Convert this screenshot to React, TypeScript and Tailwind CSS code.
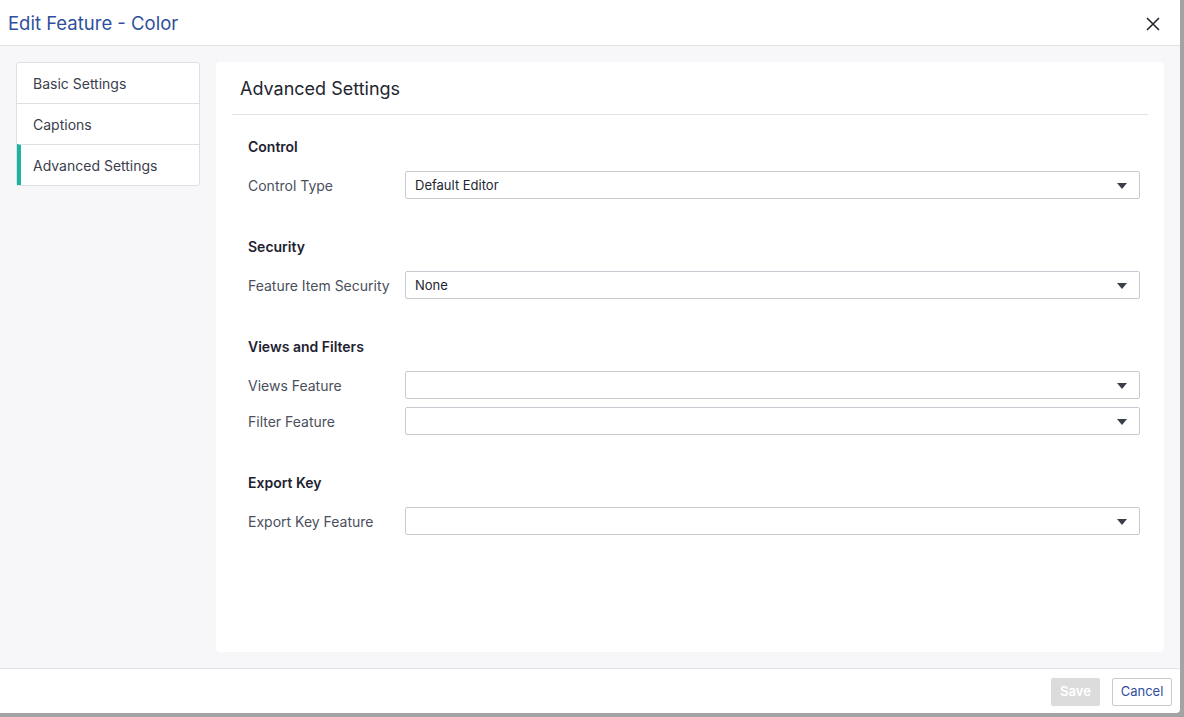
import React from 'react'

function Caret() {
  return (
    <svg width="10" height="6" viewBox="0 0 10 6" className="shrink-0">
      <path d="M0 0h10L5 6z" fill="#3b3f4a" />
    </svg>
  )
}

function Select({ value }: { value?: string }) {
  return (
    <div className="flex-1 h-[28px] flex items-center justify-between border border-[#c9c9d2] rounded-[2px] bg-white pl-[9px] pr-[12px] pt-[1px] text-[13px] text-[#23262f]">
      <span>{value ?? ''}</span>
      <Caret />
    </div>
  )
}

function Row({ label, value }: { label: string; value?: string }) {
  return (
    <div className="flex items-center">
      <div className="w-[157px] text-[14px] text-[#4b4f5c]">{label}</div>
      <Select value={value} />
    </div>
  )
}

function Section({ title, children }: { title: string; children: React.ReactNode }) {
  return (
    <div className="flex flex-col">
      <div className="text-[14px] font-semibold text-[#1e2230] h-[20px] leading-[20px] mb-[14px]">{title}</div>
      <div className="flex flex-col gap-[8px]">{children}</div>
    </div>
  )
}

export default function App() {
  const navItems = ['Basic Settings', 'Captions', 'Advanced Settings']
  return (
    <div
      className="w-[1184px] h-[717px] bg-[#a3a3a3] overflow-hidden"
      style={{ fontFamily: 'Inter, "Noto Sans", sans-serif' }}
    >
      <div className="w-[1180px] h-[713px] bg-white rounded-br-[4px] flex flex-col">
        <div className="h-[46px] shrink-0 flex items-center justify-between pl-[8px] pr-[20px] pt-[2px] border-b border-[#e2e2e6]">
          <div className="text-[18.5px] text-[#2f4f9c]">Edit Feature - Color</div>
          <svg width="14" height="14" viewBox="0 0 14 14">
            <path d="M1 1l12 12M13 1L1 13" stroke="#23262f" strokeWidth="1.6" />
          </svg>
        </div>
        <div className="flex-1 bg-[#f7f7f9] flex gap-[16px] pl-[16px] pr-[16px] pt-[16px] pb-[16px]">
          <div className="w-[184px] self-start bg-white border border-[#dedee3] rounded-[3px] flex flex-col">
            {navItems.map((item, i) => (
              <div
                key={item}
                className={
                  'flex items-center text-[14px] text-[#3a3e4c] ' +
                  (i > 0 ? 'h-[41px] border-t border-[#dedee3] ' : 'h-[40px] ') +
                  (i === 2 ? 'border-l-[4px] border-l-[#1bb3a3] pl-[12px]' : 'pl-[16px]')
                }
              >
                {item}
              </div>
            ))}
          </div>
          <div className="flex-1 bg-white rounded-[4px] flex flex-col px-[16px]">
            <div className="h-[53px] flex items-center px-[8px] border-b border-[#e2e2e6] text-[18px] text-[#23262f]">
              Advanced Settings
            </div>
            <div className="flex flex-col gap-[38px] pl-[16px] pr-[8px] pt-[22px]">
              <Section title="Control">
                <Row label="Control Type" value="Default Editor" />
              </Section>
              <Section title="Security">
                <Row label="Feature Item Security" value="None" />
              </Section>
              <Section title="Views and Filters">
                <Row label="Views Feature" />
                <Row label="Filter Feature" />
              </Section>
              <Section title="Export Key">
                <Row label="Export Key Feature" />
              </Section>
            </div>
          </div>
        </div>
        <div className="h-[45px] shrink-0 border-t border-[#e2e2e6] flex items-center justify-end gap-[12px] pr-[8px] pt-[1px]">
          <div className="w-[49px] h-[28px] rounded-[2px] bg-[#dcdcdc] text-white text-[13px] font-semibold flex items-center justify-center">
            Save
          </div>
          <div className="w-[60px] h-[28px] rounded-[2px] bg-white border border-[#c9c9d2] text-[#2f4f9c] text-[13px] flex items-center justify-center">
            Cancel
          </div>
        </div>
      </div>
    </div>
  )
}
